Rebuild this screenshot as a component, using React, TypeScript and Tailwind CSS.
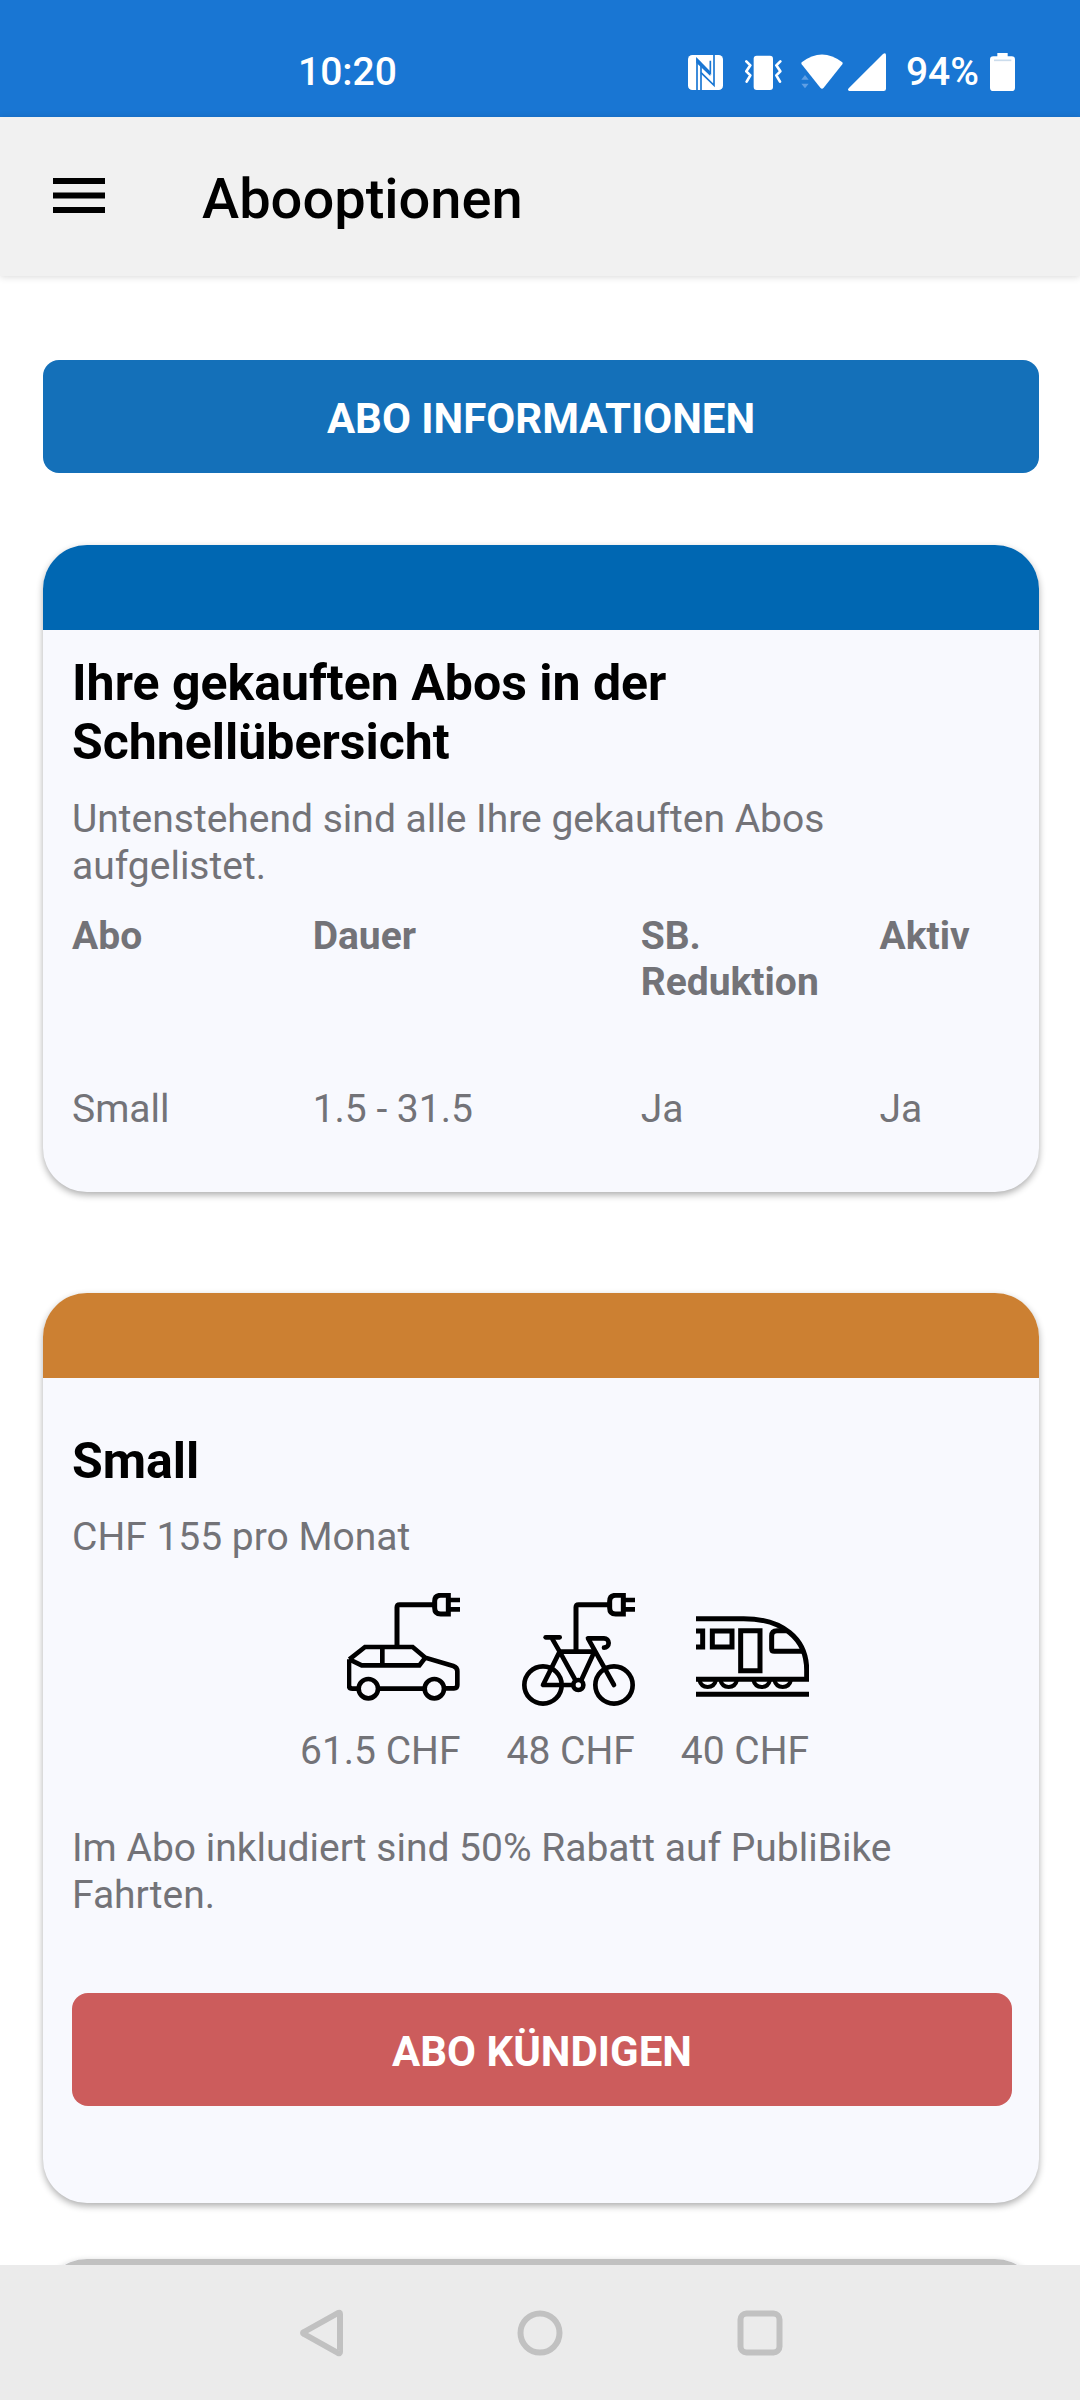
import type { ReactNode } from "react";

const subscriptions = [{ name: "Small", duration: "1.5 - 31.5", reduction: "Ja", active: "Ja" }];

const budgets = [
  { id: "car", icon: CarIcon, amount: "61.5 CHF" },
  { id: "bike", icon: BikeIcon, amount: "48 CHF" },
  { id: "train", icon: TrainIcon, amount: "40 CHF" },
];

function CarIcon() {
  return (
    <svg className="size-[113px]" viewBox="81 69 339 339" fill="none" stroke="#000" strokeWidth="14" aria-hidden="true">
      <path d="M231 228V112q0-8 8-8H342" strokeWidth="15" />
      <path d="M385 76H362q-18 0-18 18v20q0 18 18 18h23z" strokeWidth="15" />
      <path d="M388 90H420M388 118H420" />
      <path d="M88 268 135 231H278L316 263 400 288q12 4 12 16V345q0 10-10 10H376M310 356H178M112 356H97q-10 0-10-10V268" />
      <path d="M88 268 125 286H298L316 263M187 231V286" />
      <circle cx="145" cy="356" r="29" />
      <circle cx="343" cy="356" r="29" />
    </svg>
  );
}

function BikeIcon() {
  return (
    <svg className="size-[113px]" viewBox="-120 69 339 339" fill="none" stroke="#000" strokeWidth="14" aria-hidden="true">
      <path d="M42 242V112q0-8 8-8H140" strokeWidth="15" />
      <path d="M184 76H161q-18 0-18 18v20q0 18 18 18h23z" strokeWidth="15" />
      <path d="M187 90H219M187 118H219" />
      <circle cx="-57" cy="345" r="56" />
      <circle cx="156" cy="345" r="56" />
      <circle cx="49" cy="345" r="15" />
      <path d="M-49 202H-7" strokeLinecap="round" />
      <path d="M-30 205-7 245 41 332M-7 245-57 345H32M-10 245H97L57 332" strokeLinejoin="round" />
      <path d="M156 345 78 205H126a14 14 0 0 1 0 28" strokeLinecap="round" strokeLinejoin="round" />
    </svg>
  );
}

function TrainIcon() {
  return (
    <svg className="size-[113px]" viewBox="402 69 339 339" fill="none" stroke="#000" strokeWidth="15" aria-hidden="true">
      <path d="M402 146H545C660 146 734 205 734 300V328H402" />
      <path d="M402 183H422V231H402M451 183h59v48h-59zM536 182h58v120h-58z" />
      <path d="M672 182H645q-16 0-16 16V236q0 8 8 8H726" />
      <path d="M412 330q5 21 25 21t25-21M475 330q5 21 25 21t25-21M574 330q5 21 25 21t25-21M637 330q5 21 25 21t25-21" strokeWidth="12" />
      <path d="M402 373H741" />
    </svg>
  );
}

function StatusBar() {
  return (
    <div className="flex h-[117px] shrink-0 items-center justify-between bg-[#1976d3] pl-[298px] pr-[65px] pt-[27px] text-[39px] leading-[46px] font-medium text-white">
      <span>10:20</span>
      <div className="flex items-center">
        <svg className="mr-[22px] h-[35px] w-[35px]" viewBox="85 75 105 105" aria-hidden="true">
          <rect x="85" y="75" width="105" height="105" rx="13" fill="#fff" />
          <path d="M112 182V87L150 126M124 106V180" fill="none" stroke="#1976d3" strokeWidth="5" />
          <path d="M152 92V129L115 92M163 73V166L124 128" fill="none" stroke="#1976d3" strokeWidth="5" />
          <path d="M110 84 152 126V138L110 98z" fill="#1976d3" />
        </svg>
        <svg className="mr-[19px] h-[35px] w-[37px]" viewBox="257 76 111 105" aria-hidden="true">
          <rect x="283" y="78" width="58" height="103" rx="9" fill="#fff" />
          <path
            d="M261 95 273 107 261 125 273 137 262 156M363 95 351 107 363 125 351 137 362 156"
            fill="none"
            stroke="#fff"
            strokeWidth="8"
            strokeLinecap="round"
            strokeLinejoin="round"
          />
        </svg>
        <svg className="mr-[5px] h-[36px] w-[42px]" viewBox="423 74 126 108" aria-hidden="true">
          <path d="M425 99Q486 52 547 99Q549 102 547 105L491 175Q486 181 481 175L425 105Q423 102 425 99z" fill="#fff" />
          <path d="M424 151 435 137 446 151zM424 163H446L435 177z" fill="#5f9fe4" />
        </svg>
        <svg className="mr-[20px] h-[38px] w-[38px]" viewBox="564 68 114 114" aria-hidden="true">
          <path d="M568 182Q561 180 566 174L669 71Q678 65 678 75V175Q678 182 671 182z" fill="#fff" />
        </svg>
        <span>94%</span>
        <svg className="ml-[11px] h-[38px] w-[25px]" viewBox="990 68 75 114" aria-hidden="true">
          <path d="M1012 68h31v10h12q10 0 10 10v84q0 10-10 10H1000q-10 0-10-10V88q0-10 10-10h12z" fill="#fff" />
          <path d="M1002 90H1054" stroke="#cbdcec" strokeWidth="5" />
        </svg>
      </div>
    </div>
  );
}

function AppBar() {
  return (
    <header className="z-10 flex h-[159px] shrink-0 items-center bg-[#f1f1f1] pb-[2px] pl-[53px] shadow-[0_1px_7px_rgba(0,0,0,0.15)]">
      <button type="button" aria-label="Menü" className="mr-[97px]">
        <svg className="h-[35px] w-[52px]" viewBox="0 0 52 35" aria-hidden="true">
          <path d="M0 3H52M0 17.500H52M0 32H52" stroke="#000" strokeWidth="6" />
        </svg>
      </button>
      <h1 className="pt-[6px] text-[56px] leading-[66px] font-medium text-black">Abooptionen</h1>
    </header>
  );
}

function Card({ band, children }: { band: ReactNode; children?: ReactNode }) {
  return (
    <section className="rounded-[44px] bg-[#f8f9fe] shadow-[0_3px_7px_rgba(0,0,0,0.32)]">
      {band}
      {children}
    </section>
  );
}

function NavBar() {
  return (
    <nav className="z-10 flex h-[135px] shrink-0 items-center justify-center gap-[172px] bg-[#ebebeb]">
      <button type="button" aria-label="Zurück">
        <svg className="size-[48px]" viewBox="0 0 48 48" fill="none" stroke="#c1c1c1" strokeWidth="6" strokeLinejoin="round" aria-hidden="true">
          <path d="M44 5Q44 3 42 4L8 23Q6 24 8 25L42 44Q44 45 44 43z" />
        </svg>
      </button>
      <button type="button" aria-label="Startseite">
        <svg className="size-[48px]" viewBox="0 0 48 48" fill="none" stroke="#c1c1c1" strokeWidth="6" aria-hidden="true">
          <circle cx="24" cy="24" r="19.500" />
        </svg>
      </button>
      <button type="button" aria-label="Letzte Apps">
        <svg className="size-[48px]" viewBox="0 0 48 48" fill="none" stroke="#c1c1c1" strokeWidth="6" aria-hidden="true">
          <rect x="4.500" y="4.500" width="39" height="39" rx="6" />
        </svg>
      </button>
    </nav>
  );
}

export default function App() {
  return (
    <div className="flex h-screen flex-col bg-white font-[Roboto,sans-serif] text-[39px] leading-[47px] text-[#737378]">
      <StatusBar />
      <AppBar />

      <main className="min-h-0 flex-1 overflow-y-auto pt-[84px] pr-[41px] pl-[43px] [scrollbar-width:none]">
        <button type="button" className="mb-[72px] h-[113px] w-full rounded-2xl bg-[#1470b9] pt-[4px] text-[42px] font-bold text-white">
          ABO INFORMATIONEN
        </button>

        <Card band={<div className="h-[85px] rounded-t-[44px] bg-[#0067b2]" />}>
          <div className="pt-[24px] pr-[27px] pb-[59px] pl-[29px]">
            <h2 className="mb-[24px] max-w-[700px] text-[50px] leading-[59px] font-bold text-black">
              Ihre gekauften Abos in der Schnellübersicht
            </h2>
            <p className="mb-[23px] max-w-[800px]">Untenstehend sind alle Ihre gekauften Abos aufgelistet.</p>
            <table className="w-full table-fixed text-left">
              <thead>
                <tr className="align-top leading-[46px]">
                  <th className="w-[25.6%] pb-[81px] font-bold">Abo</th>
                  <th className="w-[34.9%] pb-[81px] font-bold">Dauer</th>
                  <th className="w-[25.4%] pr-[40px] pb-[81px] font-bold">SB. Reduktion</th>
                  <th className="pb-[81px] font-bold">Aktiv</th>
                </tr>
              </thead>
              <tbody>
                {subscriptions.map((item) => (
                  <tr key={item.name}>
                    <td>{item.name}</td>
                    <td>{item.duration}</td>
                    <td>{item.reduction}</td>
                    <td>{item.active}</td>
                  </tr>
                ))}
              </tbody>
            </table>
          </div>
        </Card>

        <div className="mt-[101px] mb-[56px]">
          <Card band={<div className="h-[85px] rounded-t-[44px] bg-[#cc8032]" />}>
            <div className="pt-[54px] pr-[27px] pb-[97px] pl-[29px]">
              <h2 className="mb-[23px] text-[50px] leading-[59px] font-bold text-black">Small</h2>
              <p className="mb-[32px]">CHF 155 pro Monat</p>
              <ul className="mb-[50px] flex gap-[46px] pl-[228px]">
                {budgets.map(({ id, icon: Icon, amount }) => (
                  <li key={id} className="flex flex-col items-end gap-[22px]">
                    <Icon />
                    <span>{amount}</span>
                  </li>
                ))}
              </ul>
              <p className="mb-[74px]">Im Abo inkludiert sind 50% Rabatt auf PubliBike Fahrten.</p>
              <button type="button" className="h-[113px] w-full rounded-2xl bg-[#cc5c5c] pt-[4px] text-[42px] font-bold text-white">
                ABO KÜNDIGEN
              </button>
            </div>
          </Card>
        </div>

        <Card band={<div className="h-[85px] rounded-t-[44px] bg-[#c1c1c1]" />} />
      </main>

      <NavBar />
    </div>
  );
}
